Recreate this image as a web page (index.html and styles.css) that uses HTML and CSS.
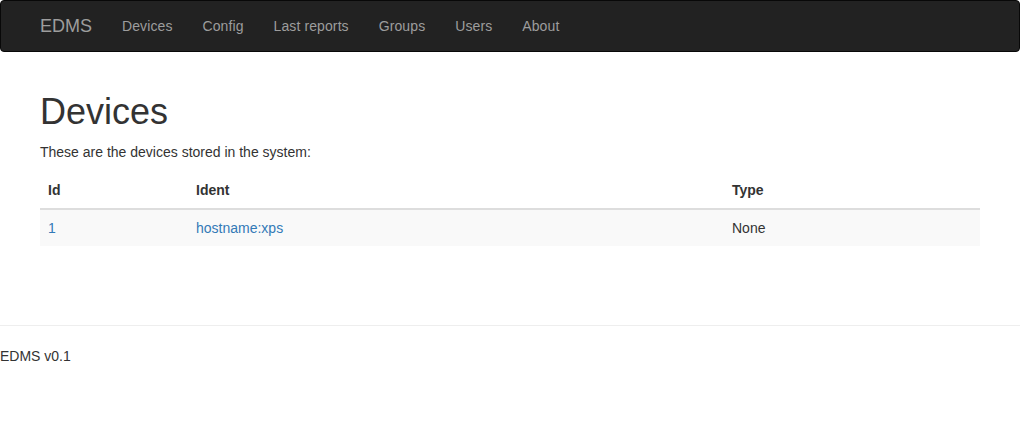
FILE: index.html
```html
<!DOCTYPE html>
<html lang="en">
<head>
<meta charset="utf-8">
<title>EDMS - Devices</title>
<link rel="stylesheet" href="styles.css">
</head>
<body>
<nav class="navbar">
  <div class="container nav-inner">
    <a class="brand" href="#">EDMS</a>
    <ul class="nav">
      <li><a href="#">Devices</a></li>
      <li><a href="#">Config</a></li>
      <li><a href="#">Last reports</a></li>
      <li><a href="#">Groups</a></li>
      <li><a href="#">Users</a></li>
      <li><a href="#">About</a></li>
    </ul>
  </div>
</nav>
<main class="container content">
  <h1>Devices</h1>
  <p>These are the devices stored in the system:</p>
  <table class="table">
    <thead>
      <tr><th class="c-id">Id</th><th class="c-ident">Ident</th><th class="c-type">Type</th></tr>
    </thead>
    <tbody>
      <tr><td><a href="#">1</a></td><td><a href="#">hostname:xps</a></td><td>None</td></tr>
    </tbody>
  </table>
</main>
<footer class="footer">
  <hr>
  <p>EDMS v0.1</p>
</footer>
</body>
</html>
```
FILE: styles.css
```css
* { box-sizing: border-box; }
html, body { margin: 0; padding: 0; }
body {
  font-family: "Liberation Sans", Arial, sans-serif;
  font-size: 14px;
  line-height: 1.42857143;
  color: #333;
  background: #fff;
}
a { color: #337ab7; text-decoration: none; }
.container {
  width: 970px;
  margin: 0 auto;
  padding: 0 15px;
}
.content { display: flow-root; }
.navbar {
  background: #222;
  border: 1px solid #080808;
  border-radius: 4px;
  min-height: 50px;
  margin-bottom: 20px;
}
.nav-inner {
  display: flex;
  align-items: stretch;
}
.brand {
  margin-left: -15px;
  padding: 15px;
  height: 50px;
  font-size: 18px;
  line-height: 20px;
  color: #9d9d9d;
}
.nav {
  display: flex;
  list-style: none;
  margin: 0;
  padding: 0;
}
.nav a {
  display: block;
  padding: 15px;
  line-height: 20px;
  color: #9d9d9d;
  letter-spacing: 0.1px;
}
h1 {
  font-size: 36px;
  font-weight: 500;
  line-height: 1.1;
  margin: 20px 0 10px;
}
p { margin: 0 0 10px; }
.table {
  width: 100%;
  border-collapse: collapse;
  border-spacing: 0;
  margin-bottom: 20px;
}
.table th, .table td {
  padding: 8px;
  text-align: left;
  vertical-align: top;
  line-height: 1.42857143;
}
.table th {
  font-weight: bold;
  border-bottom: 2px solid #ddd;
}
.table td { border-top: 1px solid #ddd; }
.table tbody tr:nth-child(odd) { background: #f9f9f9; }
.c-id { width: 148px; }
.c-ident { width: 536px; }
.footer {
  display: flow-root;
  margin-top: 39px;
}
.footer hr {
  margin: 20px 0;
  border: 0;
  border-top: 1px solid #eee;
}
.footer p { margin: 0 0 10px; }
```
